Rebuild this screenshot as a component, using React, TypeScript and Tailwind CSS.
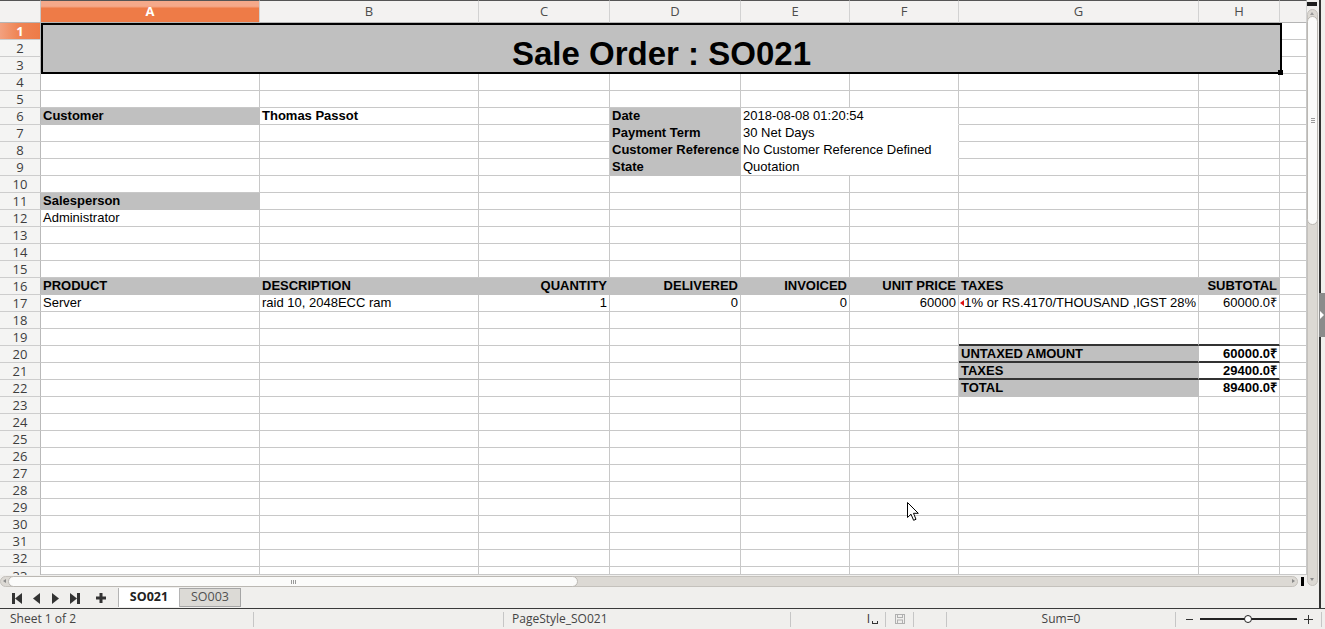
import React from "react";

type Cell = { t?: string; c?: string; span?: boolean; tri?: boolean; low?: boolean };

const DEF = "border-b border-r-[#c8c8c8] border-b-[#c8c8c8]";
const RIGHT = DEF + " justify-end";
const GRAY = "bg-[#c0c0c0] border-b border-r-[#c0c0c0] border-b-[#c0c0c0] font-bold";
const GRAYR = GRAY + " justify-end";
const WHITE_MID = "bg-white border-b border-r-[#c8c8c8] border-b-white";
const WHITE_END = "bg-white border-b border-r-[#c8c8c8] border-b-[#c8c8c8]";
const THICK = "border-b-2 border-r-[#c8c8c8] border-b-[#333333]";

const e = (n: number): Cell[] => Array.from({ length: n }, () => ({ c: DEF }));

const DATA: Record<number, Cell[]> = {
  6: [
    { t: "Customer", c: GRAY },
    { t: "Thomas Passot", c: DEF + " font-bold" },
    { c: DEF },
    { t: "Date", c: GRAY },
    { t: "2018-08-08 01:20:54", c: WHITE_MID, span: true },
    { c: DEF },
    { c: DEF },
  ],
  7: [...e(3), { t: "Payment Term", c: GRAY }, { t: "30 Net Days", c: WHITE_MID, span: true }, ...e(2)],
  8: [
    ...e(3),
    { t: "Customer Reference", c: GRAY },
    { t: "No Customer Reference Defined", c: WHITE_MID, span: true },
    ...e(2),
  ],
  9: [...e(3), { t: "State", c: GRAY }, { t: "Quotation", c: WHITE_END, span: true }, ...e(2)],
  11: [{ t: "Salesperson", c: GRAY }, ...e(7)],
  12: [{ t: "Administrator", c: DEF }, ...e(7)],
  16: [
    { t: "PRODUCT", c: GRAY },
    { t: "DESCRIPTION", c: GRAY },
    { t: "QUANTITY", c: GRAYR },
    { t: "DELIVERED", c: GRAYR },
    { t: "INVOICED", c: GRAYR },
    { t: "UNIT PRICE", c: GRAYR },
    { t: "TAXES", c: GRAY },
    { t: "SUBTOTAL", c: GRAYR },
  ],
  17: [
    { t: "Server", c: DEF },
    { t: "raid 10, 2048ECC ram", c: DEF },
    { t: "1", c: RIGHT },
    { t: "0", c: RIGHT },
    { t: "0", c: RIGHT },
    { t: "60000", c: RIGHT },
    { t: "1% or RS.4170/THOUSAND ,IGST 28%", c: RIGHT, tri: true },
    { t: "60000.0₹", c: RIGHT },
  ],
  19: [...e(6), { c: THICK }, { c: THICK }],
  20: [
    ...e(6),
    { t: "UNTAXED AMOUNT", low: true, c: "bg-[#c0c0c0] border-b-2 border-r-[#c0c0c0] border-b-[#333333] font-bold" },
    { t: "60000.0₹", low: true, c: "bg-white border-b-2 border-r-[#c8c8c8] border-b-[#333333] font-bold justify-end" },
  ],
  21: [
    ...e(6),
    { t: "TAXES", low: true, c: "bg-[#c0c0c0] border-b-2 border-r-[#c0c0c0] border-b-[#333333] font-bold" },
    { t: "29400.0₹", low: true, c: "bg-white border-b-2 border-r-[#c8c8c8] border-b-[#333333] font-bold justify-end" },
  ],
  22: [...e(6), { t: "TOTAL", c: GRAY }, { t: "89400.0₹", c: WHITE_END + " font-bold justify-end" }],
};

const CELL =
  "relative flex items-end overflow-hidden whitespace-nowrap border-r px-[2px] text-[13px] leading-[16px] text-black font-['Liberation_Sans',Arial,sans-serif]";
const UI = "font-['Open_Sans','DejaVu_Sans',sans-serif]";

const LETTERS = ["A", "B", "C", "D", "E", "F", "G", "H", ""];

function Grid() {
  const items: React.ReactNode[] = [];
  items.push(
    <div
      key="corner"
      className="border-t border-t-[#555555] border-r border-r-[#c9c9c9] border-b border-b-[#b5b5b5] bg-[#f3f2f1]"
    />
  );
  LETTERS.forEach((l, i) => {
    const sel = i === 0;
    items.push(
      <div
        key={"h" + i}
        className={
          "flex items-center justify-center border-t border-t-[#555555] border-r border-r-[#d2d2d2] border-b border-b-[#b5b5b5] text-[13px] " +
          UI +
          (sel
            ? " bg-[linear-gradient(to_bottom,#f5a98a_0%,#f5a98a_25%,#ee7b47_35%,#ee7b47_100%)] font-bold text-white"
            : " bg-[#f3f2f1] text-[#4d4d4d]")
        }
      >
        {l}
      </div>
    );
  });
  for (let r = 1; r <= 33; r++) {
    const last = r === 33;
    items.push(
      <div
        key={"r" + r}
        className={
          "flex justify-center border-r border-r-[#b9b9b9] text-[13px] leading-none " +
          UI +
          (last ? " items-start pt-[3px]" : " items-center border-b border-b-[#cdcdcd]") +
          (r === 1
            ? " bg-[linear-gradient(to_right,#f3a17f_0%,#ef8555_45%,#ee7b47_100%)] font-bold text-white"
            : " bg-[#f4f4f3] text-[#3d3d3d]")
        }
      >
        {r}
      </div>
    );
    if (r > 3) {
      const row = DATA[r] ?? e(8);
      row.forEach((c, i) => {
        items.push(
          <div
            key={r + "-" + i}
            className={CELL + " " + (c.c ?? DEF) + (c.span ? " col-span-2" : "")}
          >
            {c.tri && (
              <span className="absolute left-[1px] top-[5px] h-0 w-0 border-y-[3px] border-r-[4px] border-y-transparent border-r-[#dd1111]" />
            )}
            {c.low ? <span className="relative top-[1px]">{c.t}</span> : c.t}
          </div>
        );
      });
    }
    items.push(<div key={r + "-I"} className={CELL + " " + DEF} />);
  }

  return (
    <div className="relative grid h-[575px] w-[1307px] grid-cols-[41px_219px_219px_131px_131px_109px_109px_240px_81px_27px] grid-rows-[23px_repeat(32,17px)_8px] overflow-hidden bg-white">
      <div className="relative z-10 col-span-8 col-start-2 row-span-3 row-start-2 -mr-[2px] flex items-end justify-center border-2 border-black bg-[#c0c0c0] font-['Liberation_Sans',Arial,sans-serif] text-[33px] font-bold leading-[36px] text-black">
        Sale Order : SO021
        <span className="absolute -bottom-[3px] -right-[3px] h-[5px] w-[5px] bg-black" />
      </div>
      {items}
    </div>
  );
}

function HScroll() {
  return (
    <div className="relative h-[13px] w-[1307px] bg-[#f0efed]">
      <div className="absolute left-0 top-[1px] h-[11px] w-[1298px] rounded-full border border-[#c4c1bc] bg-[#dcd9d4]" />
      <span className="absolute left-[3px] top-[4px] h-0 w-0 border-y-[2.5px] border-r-[3px] border-y-transparent border-r-[#8a8a8a]" />
      <div className="absolute left-[8px] top-[1px] flex h-[11px] w-[570px] items-center justify-center rounded-full border border-[#bbb8b3] bg-[#fbfbfa]">
        <div className="flex gap-[1px]">
          <span className="h-[4px] w-px bg-[#9a9a9a]" />
          <span className="h-[4px] w-px bg-[#9a9a9a]" />
          <span className="h-[4px] w-px bg-[#9a9a9a]" />
        </div>
      </div>
      <span className="absolute left-[1292px] top-[4px] h-0 w-0 border-y-[2.5px] border-l-[3px] border-y-transparent border-l-[#8a8a8a]" />
      <span className="absolute left-[1301px] top-[2px] h-[9px] w-[3px] bg-black" />
    </div>
  );
}

function VScroll() {
  return (
    <div className="relative h-full w-[12px] bg-[#f0efed]">
      <span className="absolute left-0 top-[2px] h-[4px] w-[10px] bg-[#1c1c1c]" />
      <div className="absolute left-0 top-[9px] h-[577px] w-[11px] rounded-full border border-[#c4c1bc] bg-[#dcd9d4]" />
      <span className="absolute left-[3px] top-[12px] h-0 w-0 border-x-[2.5px] border-b-[3px] border-x-transparent border-b-[#9a9a9a]" />
      <div className="absolute left-0 top-[16px] flex h-[209px] w-[11px] flex-col items-center justify-center gap-[1px] rounded-full border border-[#bbb8b3] bg-[#fbfbfa]">
        <span className="h-px w-[4px] bg-[#9a9a9a]" />
        <span className="h-px w-[4px] bg-[#9a9a9a]" />
        <span className="h-px w-[4px] bg-[#9a9a9a]" />
      </div>
      <span className="absolute left-[3px] top-[578px] h-0 w-0 border-x-[2.5px] border-t-[3px] border-x-transparent border-t-[#8a8a8a]" />
    </div>
  );
}

function RightEdge() {
  return (
    <div className="relative h-full w-[6px] bg-[#f0efed]">
      <span className="absolute left-0 top-0 h-full w-[2px] bg-[#333333]" />
      <div className="absolute left-0 top-[293px] flex h-[44px] w-[6px] items-center justify-center bg-[#8b8b8b]">
        <span className="h-0 w-0 border-y-[4px] border-l-[4px] border-y-transparent border-l-white" />
      </div>
    </div>
  );
}

function NavIcon({ kind }: { kind: "first" | "prev" | "next" | "last" }) {
  const c = "#333333";
  const wide = kind === "first" || kind === "last";
  return (
    <svg width={wide ? 10 : 7} height="11" viewBox={wide ? "0 0 10 11" : "0 0 7 11"}>
      {kind === "first" && (
        <>
          <rect x="0" y="0" width="3" height="11" fill={c} />
          <polygon points="10,0 10,11 3,5.5" fill={c} />
        </>
      )}
      {kind === "prev" && <polygon points="7,0 7,11 0,5.5" fill={c} />}
      {kind === "next" && <polygon points="0,0 0,11 7,5.5" fill={c} />}
      {kind === "last" && (
        <>
          <polygon points="0,0 0,11 7,5.5" fill={c} />
          <rect x="7" y="0" width="3" height="11" fill={c} />
        </>
      )}
    </svg>
  );
}

function Tabs() {
  return (
    <div className={"flex h-[20px] w-[1325px] items-stretch bg-[#f0efed] " + UI}>
      <div className="flex flex-1 items-stretch">
        <div className="flex items-center pl-[12px]">
          <NavIcon kind="first" />
          <span className="w-[11px]" />
          <NavIcon kind="prev" />
          <span className="w-[12px]" />
          <NavIcon kind="next" />
          <span className="w-[11px]" />
          <NavIcon kind="last" />
          <span className="w-[16px]" />
          <svg width="10" height="10" viewBox="0 0 10 10">
            <rect x="3.5" y="0" width="3" height="10" fill="#333333" />
            <rect x="0" y="3.5" width="10" height="3" fill="#333333" />
          </svg>
          <span className="w-[12px]" />
        </div>
        <div className="flex h-[19px] w-[62px] items-center justify-center border-x border-[#b4b4b4] bg-white text-[12.5px] font-bold text-[#222222]">
          SO021
        </div>
        <div className="flex h-[19px] w-[61px] items-center justify-center border border-l-0 border-[#a5a5a5] bg-[#dcdad6] text-[12.5px] text-[#505050]">
          SO003
        </div>
      </div>
      <span className="w-[2px] bg-[#333333]" />
      <span className="w-[4px]" />
    </div>
  );
}

function Sep() {
  return <span className="h-[15px] w-px shrink-0 bg-[#c6c6c6]" />;
}

function Status() {
  return (
    <div className={"flex h-[21px] w-[1325px] items-center border-t border-[#3a3a3a] bg-[#f0efed] text-[12px] text-[#444444] " + UI}>
      <div className="w-[253px] shrink-0 pl-[10px]">Sheet 1 of 2</div>
      <Sep />
      <div className="w-[249px] shrink-0" />
      <Sep />
      <div className="w-[286px] shrink-0 pl-[8px]">PageStyle_SO021</div>
      <Sep />
      <div className="flex w-[94px] shrink-0 items-center justify-end pr-[7px]">
        <span className="text-[12px] text-[#333333]">I</span>
        <span className="ml-[2px] mt-[6px] h-[3px] w-[6px] border-x border-b border-[#333333]" />
      </div>
      <Sep />
      <div className="flex w-[27px] shrink-0 items-center justify-center">
        <svg width="10" height="10" viewBox="0 0 10 10">
          <rect x="0.5" y="0.5" width="9" height="9" fill="none" stroke="#b0b0b0" />
          <rect x="2.5" y="0.5" width="5" height="3" fill="none" stroke="#b0b0b0" />
          <rect x="2.5" y="6" width="5" height="3.5" fill="none" stroke="#b0b0b0" />
        </svg>
      </div>
      <Sep />
      <div className="w-[32px] shrink-0" />
      <Sep />
      <div className="w-[228px] shrink-0 text-center">Sum=0</div>
      <Sep />
      <div className="flex shrink-0 items-center">
        <span className="ml-[10px] h-px w-[7px] bg-[#333333]" />
        <div className="relative ml-[7px] flex h-[10px] w-[97px] items-center">
          <span className="h-[2px] w-full bg-[#222222]" />
          <span className="absolute left-[44px] top-[1px] h-[8px] w-[8px] rounded-full border border-[#222222] bg-white" />
        </div>
        <span className="relative ml-[7px] h-[9px] w-[9px]">
          <span className="absolute left-0 top-[4px] h-px w-[9px] bg-[#333333]" />
          <span className="absolute left-[4px] top-0 h-[9px] w-px bg-[#333333]" />
        </span>
      </div>
      <span className="ml-[8px] h-[15px] w-px bg-[#c6c6c6]" />
    </div>
  );
}

function Cursor() {
  return (
    <svg className="absolute left-[907px] top-[502px]" width="13" height="20" viewBox="0 0 13 20">
      <path d="M0.5 0.5 L0.5 15.5 L4 12.2 L6.6 18.3 L9 17.3 L6.5 11.3 L11.3 11.3 Z" fill="white" stroke="black" strokeWidth="1" strokeLinejoin="round" />
    </svg>
  );
}

export default function App() {
  return (
    <div className="relative h-[629px] w-[1325px] overflow-hidden bg-[#f0efed]">
      <div className="flex h-[588px]">
        <div className="flex w-[1307px] flex-col">
          <Grid />
          <HScroll />
        </div>
        <VScroll />
        <RightEdge />
      </div>
      <Tabs />
      <Status />
      <Cursor />
    </div>
  );
}
